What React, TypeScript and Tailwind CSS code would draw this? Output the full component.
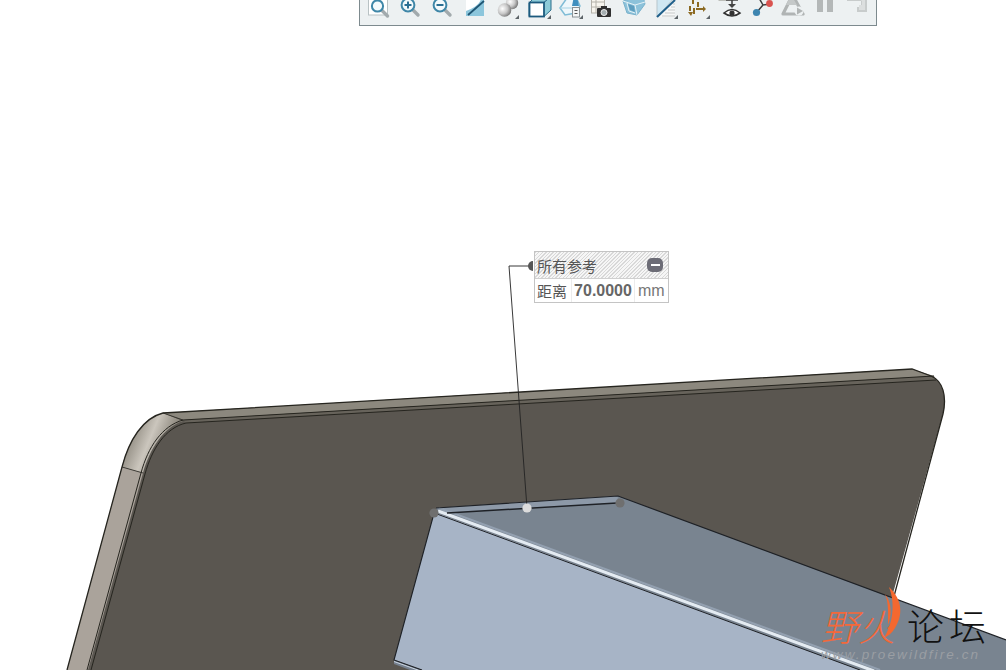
const Corner = () => <path d="M21 26 L25 26 L25 22 Z" fill="#5d6468" />

function Lens({ cx, cy, r = 5.6, sign }: { cx: number; cy: number; r?: number; sign?: 'plus' | 'minus' }) {
  return (
    <>
      <path d={`M${cx + 4} ${cy + 4} L${cx + 10} ${cy + 10}`} stroke="#a2aaad" strokeWidth="3.4" strokeLinecap="round" />
      <circle cx={cx} cy={cy} r={r} fill="#f4fafc" stroke="#3f87a8" strokeWidth="2" />
      {sign && <path d={`M${cx - 3.5} ${cy} H${cx + 3.5}`} stroke="#2b6f93" strokeWidth="2" />}
      {sign === 'plus' && <path d={`M${cx} ${cy - 3.5} V${cy + 3.5}`} stroke="#2b6f93" strokeWidth="2" />}
    </>
  )
}

const icons = [
  <>
    <rect x="2.5" y="-2" width="19" height="24" fill="#fff" stroke="#b9c2c4" />
    <Lens cx={11.5} cy={13} />
  </>,
  <Lens cx={10} cy={12} r={6.4} sign="plus" />,
  <Lens cx={10} cy={12} r={6.4} sign="minus" />,
  <>
    <rect x="4" y="3.5" width="18" height="19.5" fill="#8cc6dc" />
    <path d="M4 3.5 H19 C20 10 12 15 4 18 Z" fill="#fff" />
    <path d="M6 22 L22 8" stroke="#1f5573" strokeWidth="1.8" />
  </>,
  <>
    <circle cx="18" cy="10" r="6.2" fill="url(#sph)" />
    <circle cx="10.5" cy="17" r="6.8" fill="url(#sph)" />
    <Corner />
  </>,
  <>
    <path d="M3 10 L10 3 H25 V17 L18 23.5 H3 Z" fill="#8ccbd8" stroke="#2c6f8c" />
    <rect x="3.5" y="9.5" width="14.5" height="14" fill="#fff" stroke="#1c5a7e" strokeWidth="1.8" />
    <path d="M18 9.5 L25 3" stroke="#1c5a7e" />
    <Corner />
  </>,
  <>
    <path d="M2 15 L9 5 L18 4 L22 13 L18 20 L7 22 Z" fill="#eef7fb" stroke="#7fbcd6" strokeWidth="1.5" />
    <path d="M16 3 L19 4 L21 13 L14 13 Z" fill="#3f8fbf" />
    <path d="M2 15 L14 15" stroke="#a7d3e4" />
    <rect x="14.5" y="14.5" width="7" height="9.5" fill="#f4f6f6" stroke="#8a9296" />
    <path d="M16.5 17.5 H19.5 M16.5 20.5 H19.5" stroke="#555" />
    <Corner />
  </>,
  <>
    <rect x="2.5" y="-2" width="13" height="22" fill="#f7f5ee" stroke="#b4b2aa" />
    <path d="M2.5 4 H15.5 M2.5 9 H15.5 M2.5 14 H15.5 M7 -2 V20" stroke="#b4b2aa" />
    <rect x="8" y="15" width="14" height="9" rx="1" fill="#303030" />
    <rect x="12" y="13" width="6" height="3" fill="#303030" />
    <circle cx="15" cy="19.5" r="3" fill="#a5aeb0" stroke="#eee" />
  </>,
  <>
    <path d="M2 8 L22 3 L24 11 L16 22 L6 20 Z" fill="#8cc2da" stroke="#79b2cc" />
    <path d="M2 8 L14 12 L24 9 M14 12 L16 22 M6 10 L8 18 L14 20" stroke="#e4f1f6" fill="none" />
    <path d="M7 11 L13 13 L14 19 L9 17 Z" fill="#5e9ebf" />
  </>,
  <>
    <path d="M4 24 V4 H22 L4 24 Z" fill="#cfe7f2" stroke="#b7c5cb" />
    <path d="M22 7 V24 H6 Z" fill="#f6f7f7" />
    <path d="M20 11 H22 M18 14 H22 M15 17 H22 M12 20 H22 M9 23 H22" stroke="#c5c9c9" />
    <path d="M4 24 L22 7" stroke="#1f5f8a" strokeWidth="2" />
    <Corner />
  </>,
  <>
    <g fill="#8c6a22">
      <rect x="2" y="2" width="3" height="2" />
      <rect x="9" y="1" width="3" height="2" />
      <rect x="7" y="7" width="2" height="4" />
      <rect x="12" y="9" width="2" height="5" />
      <rect x="4" y="13" width="2" height="5" />
      <rect x="8" y="15" width="2" height="6" />
      <rect x="11" y="15" width="7" height="2" />
      <path d="M18 13 L21 16 L18 19 Z" />
      <path d="M3 19 L6 23 L8 19 Z" />
    </g>
    <Corner />
  </>,
  <>
    <rect x="2" y="-3" width="14" height="10" fill="#f5ecc8" stroke="#8c8c80" />
    <path d="M9 7 H21 M15 7 V13" stroke="#444" strokeWidth="1.6" />
    <path d="M11 11 L15 15 L19 11 Z" fill="#444" />
    <path d="M7 20 Q15 13 23 20 Q15 26 7 20 Z" fill="#fff" stroke="#333" strokeWidth="1.6" />
    <circle cx="15" cy="20" r="2.6" fill="#333" />
  </>,
  <>
    <path d="M10 5 L14 12 L22 11 M14 12 L8 19" stroke="#3d3d3d" strokeWidth="1.5" fill="none" />
    <circle cx="9" cy="3.5" r="3.4" fill="#6db04a" />
    <circle cx="20.5" cy="10.5" r="3.4" fill="#d9534f" />
    <circle cx="7.5" cy="19.5" r="3.6" fill="#3d85b0" />
  </>,
  <>
    <path d="M11.5 2 L22 21 H2 Z" fill="none" stroke="#b0b4b4" strokeWidth="3.2" strokeLinejoin="round" />
    <path d="M10 2 L5 12 L16 12 Z" fill="#c4c8c8" />
    <circle cx="18" cy="18" r="4.6" fill="#edf1f2" />
    <path d="M16 14.5 L22 18 L16 21.5 Z" fill="#b0b4b4" />
  </>,
  <>
    <rect x="4" y="-2" width="6" height="21" fill="#b4b8b8" />
    <rect x="14" y="-2" width="6" height="21" fill="#b4b8b8" />
  </>,
  <>
    <path d="M2 2 H22 V19 H12 V14 H16 V8 H2 Z" fill="#c8cccc" />
    <path d="M13 5 H20 V17 H14 V12 H17 V8 Z" fill="#dcdfdf" />
  </>,
]

export default function App() {
  return (
    <div className="relative h-[670px] w-[1006px] overflow-hidden bg-white">
      {/* model view */}
      <svg className="absolute inset-0" width="1006" height="670" viewBox="0 0 1006 670">
        <defs>
          <linearGradient id="fillet" x1="128" y1="440" x2="165" y2="455" gradientUnits="userSpaceOnUse">
            <stop offset="0" stopColor="#8f8a80" />
            <stop offset="0.5" stopColor="#cbc6bd" />
            <stop offset="1" stopColor="#8b867c" />
          </linearGradient>
          <radialGradient id="sph" cx="0.35" cy="0.4" r="0.75">
            <stop offset="0" stopColor="#fff" />
            <stop offset="0.5" stopColor="#c8c8c8" />
            <stop offset="1" stopColor="#5e5e5e" />
          </radialGradient>
        </defs>

        {/* plate */}
        <path d="M67 670 L122 467 C129 440 143 418 163 413 L912 369 L931 376 C943 381 947 396 943 414 L880 640 L880 670 Z" fill="#5a5650" />
        <path d="M163 413 L912 369 L934 376 L183 420 Z" fill="#8c887e" />
        <path d="M183 420 L934 376 L936 380 L186 423 Z" fill="#67635b" />
        <path d="M67 670 L122 467 L143 473 L88 670 Z" fill="#aaa39b" />
        <path d="M122 467 C129 440 143 418 163 413 L183 421 C164 427 150 448 143 473 Z" fill="url(#fillet)" />
        <g fill="none" stroke="#26251f">
          <path d="M67 670 L122 467 C129 440 143 418 163 413 L912 369 L931 376 C943 381 947 396 943 414 L893 600" strokeWidth="1.3" />
          <path d="M87 670 L141 473 C148 447 162 426 183 420 L934 376" />
          <path d="M91 670 L145 474 C152 449 165 428 186 423 L936 380" />
          <path d="M122 467 L143 473 M163 413 L183 420" strokeWidth="0.8" />
        </g>

        {/* channel */}
        <path d="M436 508 L618 496 L1006 640 V670 H860 L437 513 Z" fill="#798490" />
        <path d="M436 508 L618 496 L617 503 L447 513 Z" fill="#8d99a8" />
        <path d="M433 517 L437 513 L860 670 H422 L394 660 Z" fill="#a7b4c6" />
        <path d="M439 508 L880 670" stroke="#93a0b0" strokeWidth="2" />
        <path d="M438 511 L874 671" stroke="#e4ebf2" strokeWidth="3" />
        <path d="M394 660 L422 670 H410 L394 664 Z" fill="#75808f" />
        <path d="M394 661.5 L422 671.5" stroke="#c9d3df" strokeWidth="1" />
        <g fill="none" stroke="#1e2126">
          <path d="M436 508 L618 496 L1006 640" strokeWidth="1.2" />
          <path d="M447 513 L617 503" strokeWidth="1.5" />
          <path d="M437 514 L860 670" strokeWidth="1" />
          <path d="M433 517 L394 660 L422 670" strokeWidth="1.1" />
        </g>

        {/* leader */}
        <path d="M527 508 L509 266 H530" fill="none" stroke="#222" strokeWidth="0.9" />
        <path d="M533 261 V271 A5 5 0 0 1 533 261 Z" fill="#555" />
        <circle cx="527" cy="508" r="4.6" fill="#dcdcdc" />
        <circle cx="620" cy="503" r="4.6" fill="#6f6f6f" />
        <circle cx="434" cy="513" r="4.6" fill="#6f6f6f" />
      </svg>

      {/* toolbar */}
      <div className="relative ml-[359px] flex h-[26px] w-[518px] gap-[7.93px] overflow-hidden border-x border-b border-[#7d8a8e] bg-[#edf1f2] pl-[6px]">
        {icons.map((icon, i) => (
          <svg key={i} className="-mt-[7px] shrink-0 overflow-visible" width="24" height="25" viewBox="0 0 24 25">
            {icon}
          </svg>
        ))}
      </div>

      {/* callout */}
      <div className="absolute left-[534px] top-[251px] flex h-[52px] w-[135px] flex-col border border-[#c4c4c4] bg-white font-['Noto_Sans_CJK_SC',sans-serif] text-[#555]">
        <div className="flex h-[27px] items-center justify-between border-b border-[#d0d0d0] bg-[repeating-linear-gradient(135deg,#d8d8d8_0,#d8d8d8_1px,#f6f6f6_1px,#f6f6f6_2.5px)] pl-[2px] pr-[5px]">
          <span className="text-[15px] leading-none">所有参考</span>
          <span className="flex h-[14px] w-[16px] items-center justify-center rounded-[5px] bg-[#6c6c76]">
            <span className="h-[2px] w-[9px] bg-white" />
          </span>
        </div>
        <div className="flex flex-1 items-center">
          <span className="w-[36px] pl-[2px] text-[15px] leading-none">距离</span>
          <span className="w-[64px] border-x border-[#ececec] text-center font-['Liberation_Sans',sans-serif] text-[16px] font-bold leading-[23px] text-[#666]">70.0000</span>
          <span className="pl-[3px] font-['Liberation_Sans',sans-serif] text-[16px] leading-none text-[#777]">mm</span>
        </div>
      </div>

      {/* watermark */}
      <div className="absolute left-[821px] top-[602px] w-[185px]">
        <div className="flex h-[46px] items-center font-['Noto_Sans_CJK_SC',sans-serif] text-[37px] font-light leading-none">
          <span className="w-[86px] italic text-[#f4683a]">野火</span>
          <span className="tracking-[5px] text-[#111]">论坛</span>
        </div>
        <div className="font-['Liberation_Sans',sans-serif] text-[13.5px] italic leading-[14px] tracking-[2.1px] text-[#9a9ea3]">www.proewildfire.cn</div>
        <svg className="absolute -top-[18px] left-[59px]" width="30" height="60" viewBox="0 0 30 60">
          <path d="M9 3 C20 13 25 28 15 44 C12 49 8 52 4 54 C12 41 16 21 9 3 Z" fill="#f4682f" />
          <path d="M5 10 C12 19 12 31 8 41 C8 31 9 19 5 10 Z" fill="#f4682f" />
        </svg>
      </div>
    </div>
  )
}
